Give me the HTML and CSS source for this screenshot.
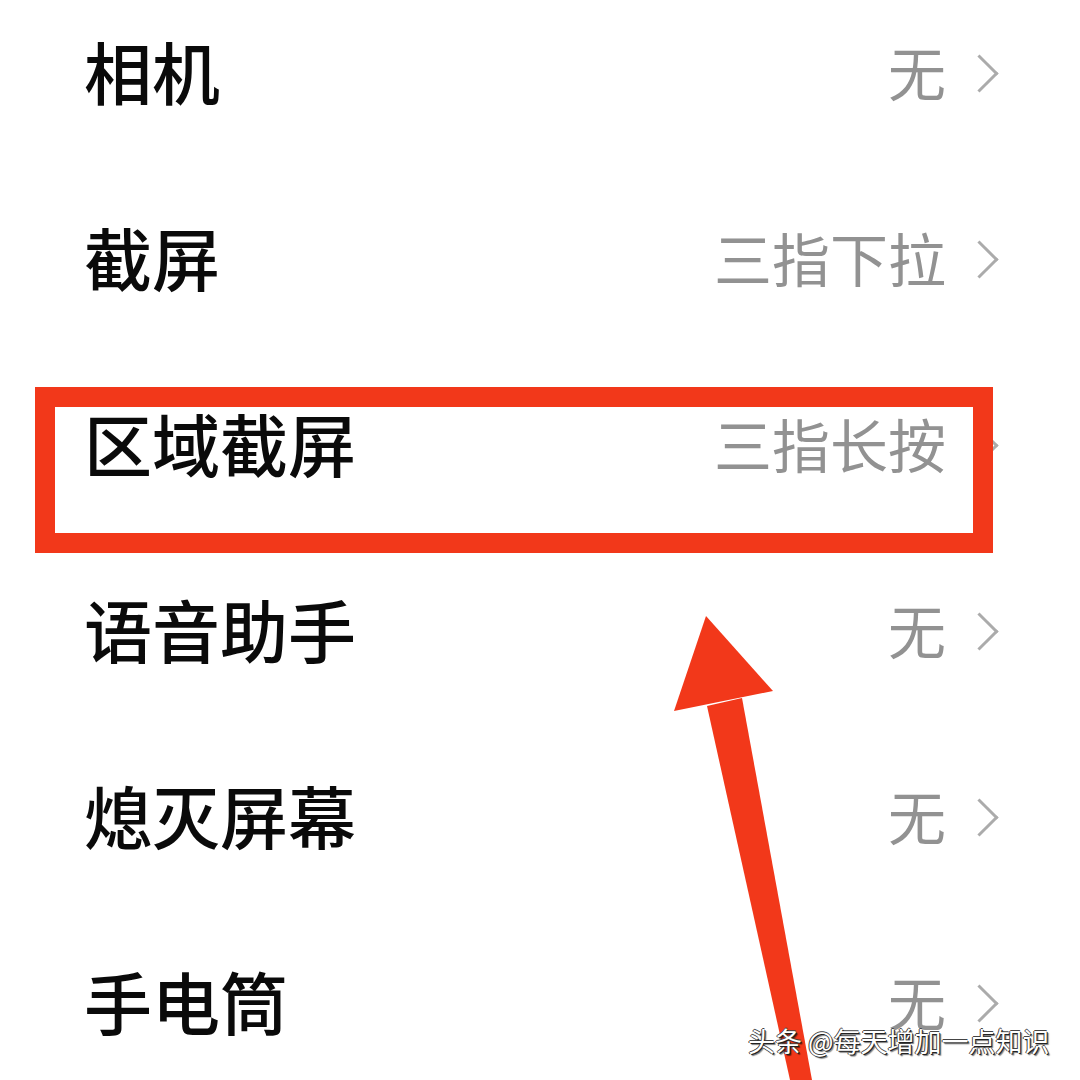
FILE: index.html
```html
<!DOCTYPE html>
<html lang="zh-CN">
<head>
<meta charset="utf-8">
<title>手势快捷方式</title>
<link rel="stylesheet" href="styles.css">
</head>
<body>
<div class="screen">
  <ul class="list">
    <li class="row"><span class="label">相机</span><span class="value">无</span><span class="chev"></span></li>
    <li class="row"><span class="label">截屏</span><span class="value">三指下拉</span><span class="chev"></span></li>
    <li class="row"><span class="label">区域截屏</span><span class="value">三指长按</span><span class="chev"></span></li>
    <li class="row"><span class="label">语音助手</span><span class="value">无</span><span class="chev"></span></li>
    <li class="row"><span class="label">熄灭屏幕</span><span class="value">无</span><span class="chev"></span></li>
    <li class="row"><span class="label">手电筒</span><span class="value">无</span><span class="chev"></span></li>
  </ul>
  <div class="highlight"></div>
  <svg class="arrow" width="1080" height="1080" viewBox="0 0 1080 1080">
    <polygon points="707,706 742,698 812,1080 790,1080" fill="#f2381a"/>
    <polygon points="706,616 773,691 674,711" fill="#f2381a"/>
  </svg>
  <div class="watermark">头条 @每天增加一点知识</div>
</div>
</body>
</html>
```
FILE: styles.css
```css
html, body {
  margin: 0;
  padding: 0;
  background: #ffffff;
}
.screen {
  position: relative;
  width: 1080px;
  height: 1080px;
  overflow: hidden;
  background: #ffffff;
  font-family: "Noto Sans CJK SC", "Noto Sans", sans-serif;
}
.list {
  list-style: none;
  margin: -22px 0 0 0;
  padding: 0;
}
.row {
  display: flex;
  align-items: center;
  height: 186px;
  padding: 0 82px 0 84px;
}
.label {
  flex: 1;
  font-size: 68px;
  font-weight: 500;
  line-height: 1;
  color: #0a0a0a;
}
.value {
  font-size: 58px;
  font-weight: 400;
  line-height: 1;
  color: #929292;
}
.chev {
  width: 22px;
  height: 38px;
  margin-left: 30px;
  position: relative;
  top: 2px;
}
.chev::before {
  content: "";
  position: absolute;
  left: -10px;
  top: 6px;
  width: 24px;
  height: 24px;
  border-top: 3px solid #ababab;
  border-right: 3px solid #ababab;
  transform: rotate(45deg);
  transform-origin: center;
}
.highlight {
  position: absolute;
  left: 35px;
  top: 387px;
  width: 918px;
  height: 126px;
  border: 20px solid #f2381a;
}
.arrow {
  position: absolute;
  left: 0;
  top: 0;
}
.watermark {
  position: absolute;
  left: 748px;
  top: 1025px;
  font-size: 27px;
  line-height: 1.2;
  color: #ffffff;
  text-shadow: 1px 1px 0 #222, -1px 0 0 #444, 0 -1px 0 #444, 2px 2px 1px rgba(0,0,0,0.5);
  white-space: nowrap;
}
```
